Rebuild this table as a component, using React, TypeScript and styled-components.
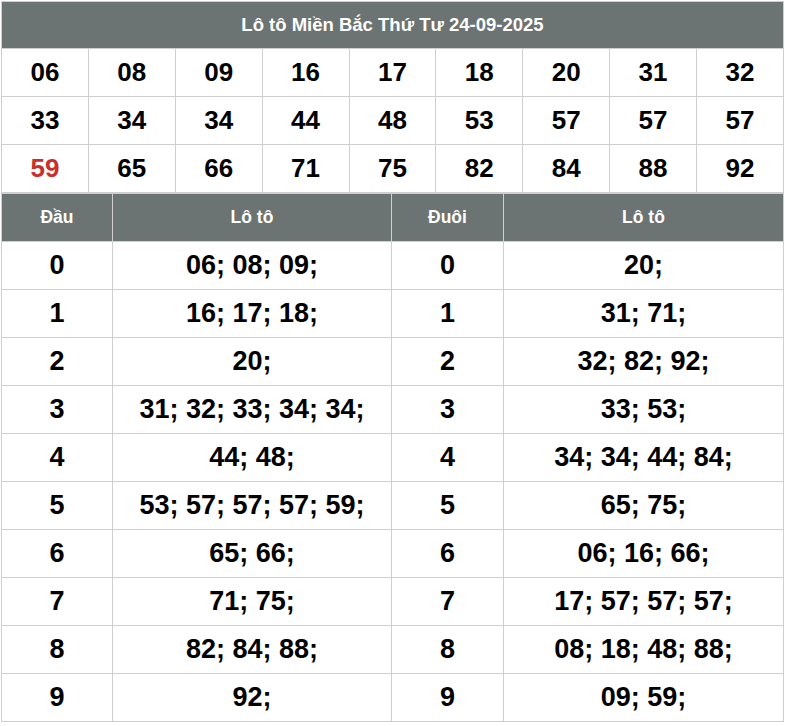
import React from "react";
import styled, { createGlobalStyle } from "styled-components";

const Global = createGlobalStyle`
  html, body { margin: 0; padding: 0; background: #fff; }
  body { font-family: "Liberation Sans", Arial, sans-serif; }
`;

const Wrap = styled.div`
  width: 783px;
  padding: 1px 0 0 1px;
  display: flex;
  flex-direction: column;
`;

const Table = styled.table`
  width: 100%;
  border-collapse: collapse;
  table-layout: fixed;
  font-family: "Liberation Sans", Arial, sans-serif;
  font-weight: bold;
`;

const HeadCell = styled.th<{ $h?: number; $w?: number; $fs?: number }>`
  background: #6c7373;
  color: #fff;
  font-size: ${(p) => p.$fs ?? 17.5}px;
  font-weight: bold;
  height: ${(p) => p.$h ?? 47}px;
  padding: 0;
  border: 1px solid #cfcfcf;
  text-align: center;
  ${(p) => (p.$w ? `width: ${p.$w}px;` : "")}
`;

const NumCell = styled.td<{ $red?: boolean; $fs?: number }>`
  height: 47px;
  padding: 0;
  border: 1px solid #cfcfcf;
  text-align: center;
  font-size: ${(p) => p.$fs ?? 27}px;
  color: ${(p) => (p.$red ? "#c9302c" : "#000")};
`;

const grid = [
  ["06", "08", "09", "16", "17", "18", "20", "31", "32"],
  ["33", "34", "34", "44", "48", "53", "57", "57", "57"],
  ["59", "65", "66", "71", "75", "82", "84", "88", "92"],
];

const dau = [
  "06; 08; 09;",
  "16; 17; 18;",
  "20;",
  "31; 32; 33; 34; 34;",
  "44; 48;",
  "53; 57; 57; 57; 59;",
  "65; 66;",
  "71; 75;",
  "82; 84; 88;",
  "92;",
];

const duoi = [
  "20;",
  "31; 71;",
  "32; 82; 92;",
  "33; 53;",
  "34; 34; 44; 84;",
  "65; 75;",
  "06; 16; 66;",
  "17; 57; 57; 57;",
  "08; 18; 48; 88;",
  "09; 59;",
];

export default function App() {
  return (
    <>
      <Global />
      <Wrap>
        <Table>
          <thead>
            <tr>
              <HeadCell colSpan={9} $h={46} $fs={18.5}>
                Lô tô Miền Bắc Thứ Tư 24-09-2025
              </HeadCell>
            </tr>
          </thead>
          <tbody>
            {grid.map((row, i) => (
              <tr key={i}>
                {row.map((n, j) => (
                  <NumCell key={j} $fs={26} $red={i === 2 && j === 0}>
                    {n}
                  </NumCell>
                ))}
              </tr>
            ))}
          </tbody>
        </Table>
        <Table>
          <thead>
            <tr>
              <HeadCell $w={110}>Đầu</HeadCell>
              <HeadCell $w={278}>Lô tô</HeadCell>
              <HeadCell $w={111}>Đuôi</HeadCell>
              <HeadCell>Lô tô</HeadCell>
            </tr>
          </thead>
          <tbody>
            {dau.map((d, i) => (
              <tr key={i}>
                <NumCell>{i}</NumCell>
                <NumCell>{d}</NumCell>
                <NumCell>{i}</NumCell>
                <NumCell>{duoi[i]}</NumCell>
              </tr>
            ))}
          </tbody>
        </Table>
      </Wrap>
    </>
  );
}
